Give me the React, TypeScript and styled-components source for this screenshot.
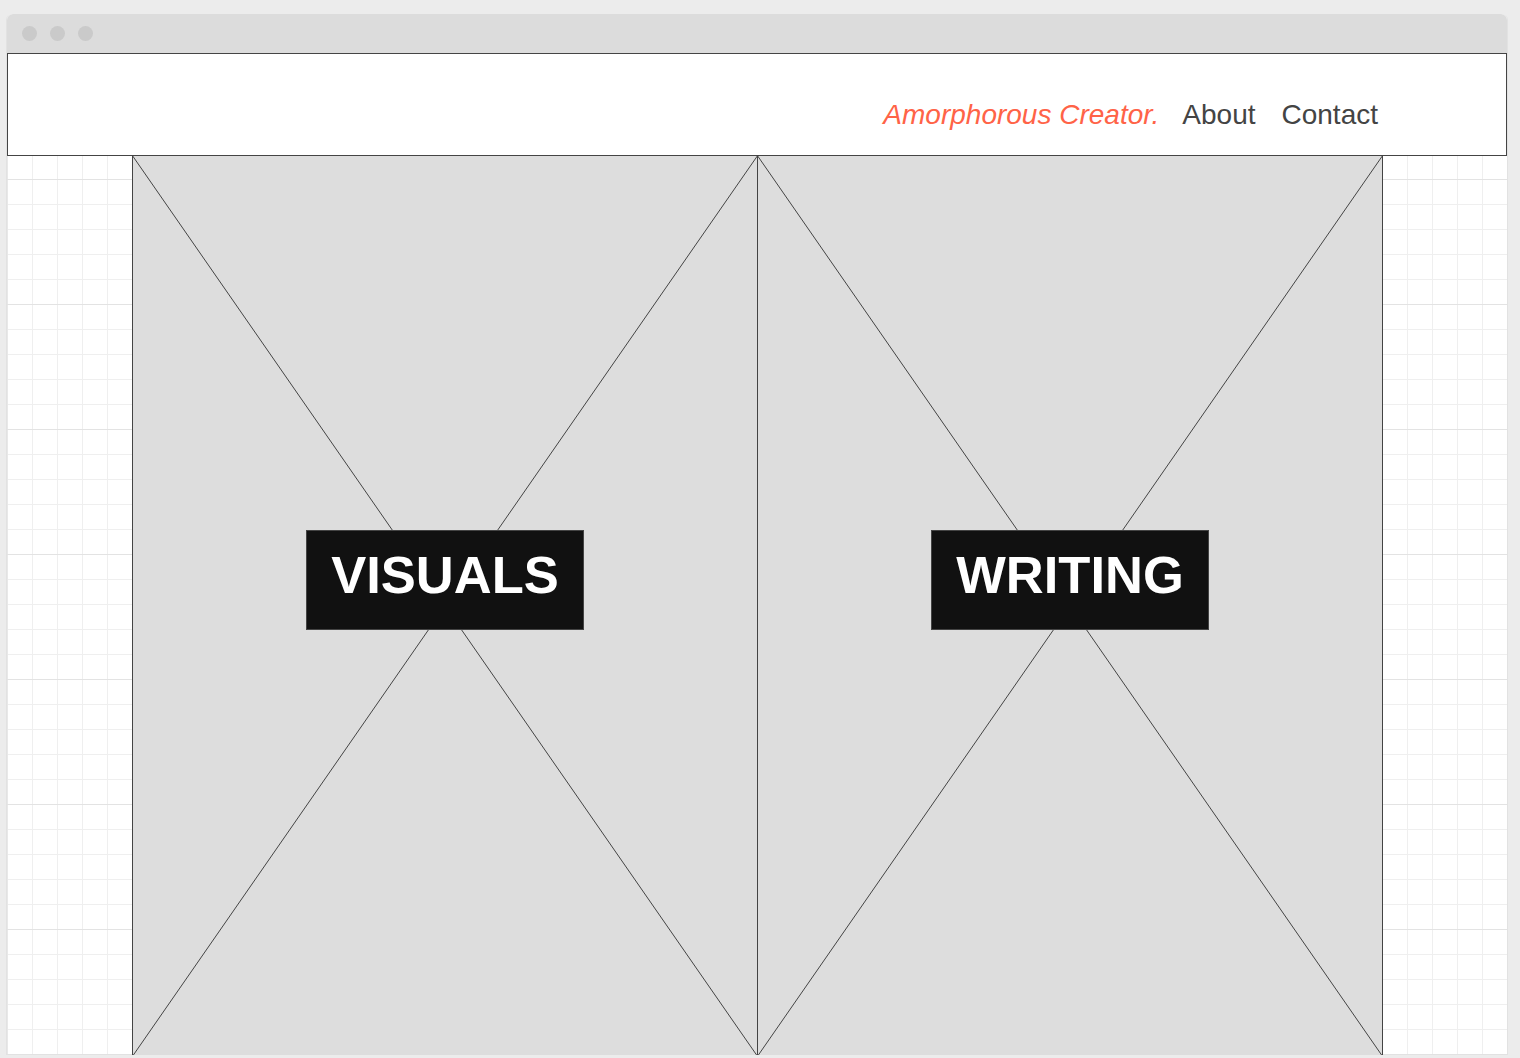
import React from "react";
import styled, { createGlobalStyle } from "styled-components";

const GlobalStyle = createGlobalStyle`
  html, body {
    margin: 0;
    padding: 0;
    background: #ececec;
    font-family: "Liberation Sans", Arial, sans-serif;
    overflow: hidden;
  }
`;

const Window = styled.div`
  margin: 14px 0 0 6px;
  width: 1502px;
  height: 1041px;
  box-sizing: border-box;
  border-left: 1px solid #e2e2e2;
  border-right: 1px solid #e2e2e2;
  border-bottom: 1px solid #e2e2e2;
  border-radius: 6px 6px 0 0;
  background: #fff;
  display: flex;
  flex-direction: column;
`;

const TitleBar = styled.div`
  height: 39px;
  flex: none;
  background: #dcdcdc;
  border-radius: 6px 6px 0 0;
  display: flex;
  align-items: center;
  gap: 13px;
  padding-left: 15px;
  box-sizing: border-box;
`;

const Dot = styled.span`
  width: 15px;
  height: 15px;
  border-radius: 50%;
  background: #cacaca;
`;

const Body = styled.div`
  flex: 1;
  min-height: 0;
  display: flex;
  flex-direction: column;
  background-color: #fff;
  background-image:
    linear-gradient(to bottom, transparent 124px, #e3e3e3 124px),
    linear-gradient(to right, transparent 124px, #e8e8e8 124px),
    linear-gradient(to bottom, transparent 24px, #efefef 24px),
    linear-gradient(to right, transparent 24px, #efefef 24px);
  background-size: 125px 125px, 125px 125px, 25px 25px, 25px 25px;
  background-position: 1px 2px, 1px 2px, 1px 2px, 1px 2px;
`;

const Header = styled.header`
  height: 103px;
  flex: none;
  box-sizing: border-box;
  border: 1px solid #444;
  background: #fff;
  display: flex;
  justify-content: flex-end;
  align-items: flex-start;
  padding: 45px 128px 0 0;
`;

const Nav = styled.nav`
  display: flex;
  align-items: baseline;
  gap: 26px;
  font-size: 28px;
  line-height: 32px;
`;

const Brand = styled.span`
  color: #ff6347;
  font-style: italic;
  margin-right: -3px;
`;

const NavLink = styled.span`
  color: #444;
`;

const Gallery = styled.main`
  margin-left: 125px;
  width: 1251px;
  box-sizing: border-box;
  border-left: 1px solid #444;
  border-bottom: 1px solid #444;
  display: grid;
  grid-template-columns: 625px 625px;
  height: 901px;
  flex: none;
`;

const Panel = styled.section`
  position: relative;
  background: #dddddd;
  border-right: 1px solid #444;
  display: flex;
  align-items: center;
  justify-content: center;
  padding-bottom: 52px;
`;

const Cross = styled.svg`
  position: absolute;
  top: -1px;
  left: -1px;
  width: calc(100% + 2px);
  height: calc(100% + 2px);
  pointer-events: none;
`;

const Label = styled.h2`
  position: relative;
  margin: 0;
  background: #111;
  border: 1px solid #444;
  color: #fff;
  font-size: 52.5px;
  line-height: 52px;
  font-weight: 700;
  padding: 18px 0 28px;
  width: 278px;
  box-sizing: border-box;
  text-align: center;
`;

const Placeholder: React.FC<{ label: string }> = ({ label }) => (
  <Panel>
    <Cross viewBox="0 0 100 100" preserveAspectRatio="none">
      <line x1="0" y1="0" x2="100" y2="100" stroke="#444" strokeWidth="1" vectorEffect="non-scaling-stroke" />
      <line x1="100" y1="0" x2="0" y2="100" stroke="#444" strokeWidth="1" vectorEffect="non-scaling-stroke" />
    </Cross>
    <Label>{label}</Label>
  </Panel>
);

export default function App() {
  return (
    <>
      <GlobalStyle />
      <Window>
        <TitleBar>
          <Dot />
          <Dot />
          <Dot />
        </TitleBar>
        <Body>
          <Header>
            <Nav>
              <Brand>Amorphorous Creator.</Brand>
              <NavLink>About</NavLink>
              <NavLink>Contact</NavLink>
            </Nav>
          </Header>
          <Gallery>
            <Placeholder label="VISUALS" />
            <Placeholder label="WRITING" />
          </Gallery>
        </Body>
      </Window>
    </>
  );
}
